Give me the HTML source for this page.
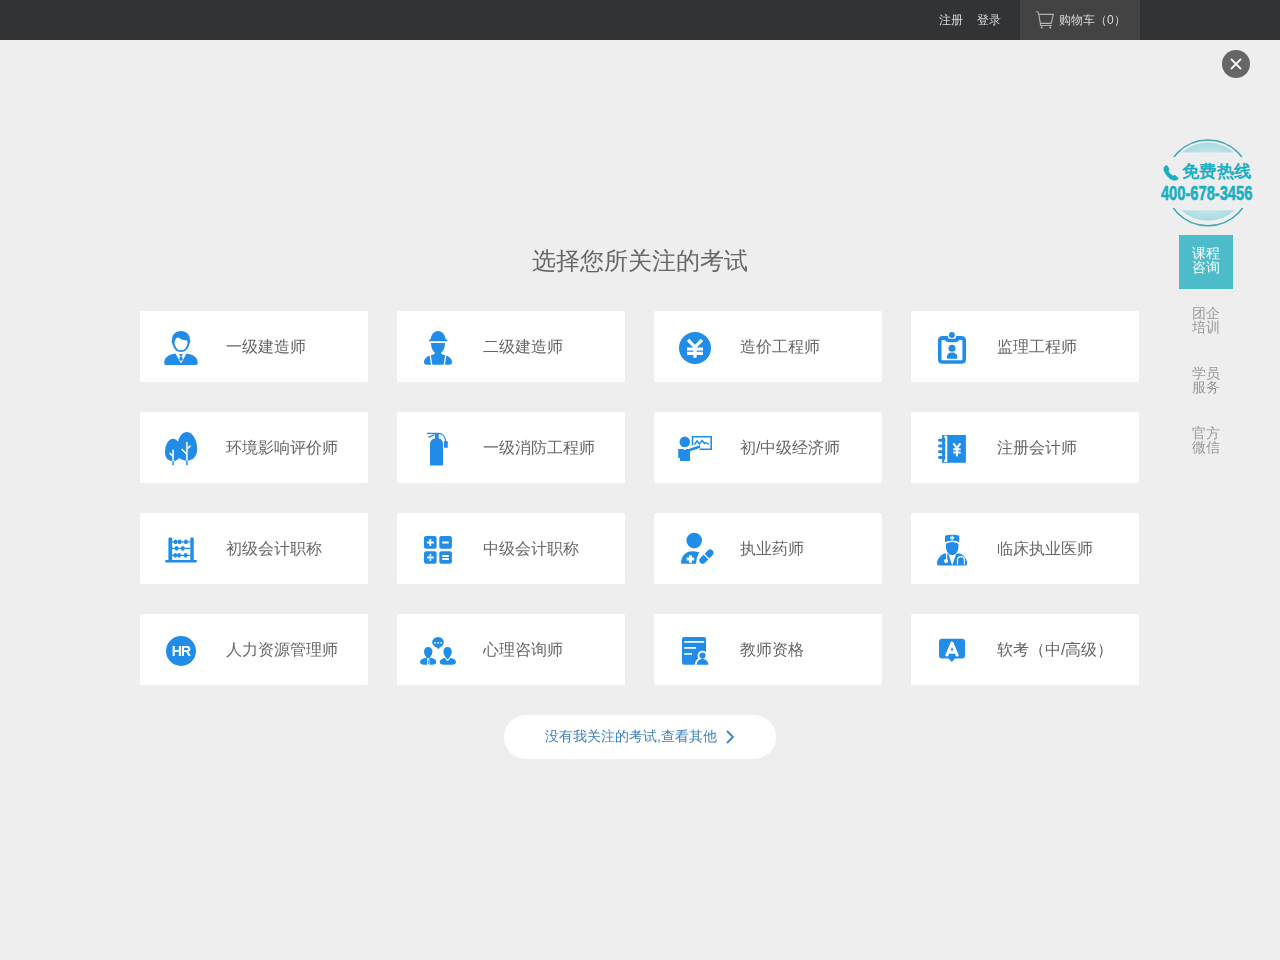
<!DOCTYPE html>
<html><head><meta charset="utf-8"><title>选择您所关注的考试</title>
<style>
*{margin:0;padding:0;box-sizing:border-box}
html,body{width:1280px;height:960px;overflow:hidden;background:#eeeeee;font-family:"Liberation Sans",sans-serif}
.top{position:absolute;left:0;top:0;width:1280px;height:40px;background:#323335}
.top .lk{position:absolute;top:12px;font-size:12px;line-height:16px;color:#d8d8d8;will-change:transform}
.cart{position:absolute;left:1020px;top:0;width:120px;height:40px;background:#434343}
.close{position:absolute;left:1222px;top:50px;width:28px;height:28px;border-radius:50%;background:#666}
.title{position:absolute;left:0;top:245px;width:1280px;text-align:center;font-size:24px;line-height:32px;color:#666;will-change:transform}
.card{position:absolute;width:228px;height:71px;background:#fff;border-radius:2px}
.card svg{position:absolute;left:0;top:0;will-change:transform}
.card span{position:absolute;left:86px;top:25px;font-size:16px;line-height:22px;color:#666;will-change:transform;white-space:nowrap}
.more{position:absolute;left:504px;top:715px;width:272px;height:44px;border-radius:22px;background:#fff}
.more span{position:absolute;left:41px;top:11px;font-size:14px;line-height:20px;color:#3a7fc2;white-space:nowrap;will-change:transform}
.nav{position:absolute;left:1179px;width:54px;height:54px;text-align:center;font-size:14px;line-height:14px;color:#999}
.nav div{position:absolute;left:0;top:11px;width:54px;will-change:transform}
.nav.on{background:#4cbcca;color:#fff}
</style></head><body>
<div class="top">
  <div class="lk" style="left:939px">注册</div>
  <div class="lk" style="left:977px">登录</div>
  <div class="cart">
    <svg width="120" height="40" style="position:absolute;left:0;top:0" viewBox="1020 0 120 40"><path fill="none" stroke="#b4b4b4" stroke-width="1.1" stroke-linejoin="round" d="M1036.3,11.4 Q1038.4,11.6 1038.8,14 L1040.3,23.4 L1051.2,23.4 L1053.4,14.4 L1038.9,14.4 M1040.3,23.4 L1040.5,25.5 L1052,25.5"/><circle cx="1041.7" cy="27.5" r="0.9" fill="#c8c8c8"/><circle cx="1050.3" cy="27.5" r="0.9" fill="#c8c8c8"/></svg>
    <div class="lk" style="left:39px">购物车（0）</div>
  </div>
</div>
<div class="close"><svg width="28" height="28" style="position:absolute;left:0;top:0"><path d="M8.9,8.9 L19.1,19.1 M19.1,8.9 L8.9,19.1" stroke="#fff" stroke-width="1.9"/></svg></div>

<div class="title">选择您所关注的考试</div>

<div class="card" style="left:140px;top:311px"><svg width="80" height="71" viewBox="0 0 80 71" fill="#228de8" stroke="#228de8" stroke-width="0"><path d="M41,20 C46.5,20 50,23.5 50,29 C50.6,29.5 50.6,31.5 49.6,32.5 C48.5,37.5 45.5,41 41,41 C36.5,41 33.5,37.5 32.4,32.5 C31.4,31.5 31.4,29.5 32,29 C32,23.5 35.5,20 41,20 Z"/>
<path fill="#fff" d="M35,29.5 C36,27 37.5,26 38.5,26.5 C40.5,28.5 44,29.5 47.3,29.6 C47.6,31 47.6,32.5 47.2,33.5 C46.2,37.5 44,39.3 41,39.3 C38,39.3 35.8,37.5 34.8,33.5 C34.5,32 34.6,30.5 35,29.5 Z"/>
<path d="M24.2,52 C24.2,46 29,43.5 35.5,42.5 L41,52.6 L46.5,42.5 C53,43.5 57.8,46 57.8,52 C57.8,53.3 57,54 55.8,54 L26.2,54 C25,54 24.2,53.3 24.2,52 Z"/>
<path d="M39.4,43.1 L42.6,43.1 L42.1,45.1 L39.9,45.1 Z M39.9,45.6 L42.1,45.6 L42.8,48.5 L41,50 L39.2,48.5 Z"/></svg><span>一级建造师</span></div>
<div class="card" style="left:397px;top:311px"><svg width="80" height="71" viewBox="0 0 80 71" fill="#228de8" stroke="#228de8" stroke-width="0"><path d="M33.6,29 C33.6,24.5 36.5,20 41,20 C45.5,20 48.6,24.5 48.6,29 Z"/>
<rect x="31.9" y="28.6" width="18.6" height="1.6" rx="0.8"/>
<path d="M34,32.1 L48,32.1 C48,36.5 46.8,39.2 44.6,41.3 C43.8,42 44,43.2 45.5,43.6 L47.5,43.9 C52,44.8 55,48 55,51 C55,52.8 54,53.7 52.5,53.7 L29.5,53.7 C28,53.7 27,52.8 27,51 C27,48 30,44.8 34.5,43.9 L36.5,43.6 C38,43.2 38.2,42 37.4,41.3 C35.2,39.2 34,36.5 34,32.1 Z"/>
<path stroke="#fff" stroke-width="1.3" fill="none" d="M33.1,43.6 L34.8,54.5 M48.9,43.6 L47.2,54.5"/></svg><span>二级建造师</span></div>
<div class="card" style="left:654px;top:311px"><svg width="80" height="71" viewBox="0 0 80 71" fill="#228de8" stroke="#228de8" stroke-width="0"><circle cx="41" cy="37" r="16"/>
<path stroke="#fff" stroke-width="3.2" fill="none" d="M34,28.8 L41,36 L48,28.8 M33,38 L49,38 M33,42.4 L49,42.4 M41,35.5 L41,46.8"/></svg><span>造价工程师</span></div>
<div class="card" style="left:911px;top:311px"><svg width="80" height="71" viewBox="0 0 80 71" fill="#228de8" stroke="#228de8" stroke-width="0"><path fill-rule="evenodd" d="M31.5,25 L36.75,25 C36.9,26.9 37.5,27.75 38.8,27.75 L43.2,27.75 C44.5,27.75 45.1,26.9 45.25,25 L50.5,25 C53.5,25 55,26.5 55,29.5 L55,48.25 C55,51.25 53.5,52.75 50.5,52.75 L31.5,52.75 C28.5,52.75 27,51.25 27,48.25 L27,29.5 C27,26.5 28.5,25 31.5,25 Z M32,29 L33.7,29 C35,30.5 36,31.2 37.8,31.2 L44.2,31.2 C46,31.2 47,30.5 48.3,29 L50,29 C51,29 51.4,29.4 51.4,30.4 L51.4,48 C51.4,49 51,49.3 50,49.3 L32,49.3 C31,49.3 30.5,49 30.5,48 L30.5,30.4 C30.5,29.4 31,29 32,29 Z"/>
<circle cx="40.9" cy="24" r="2.9"/>
<circle cx="41" cy="37.2" r="3.5"/>
<path d="M35.8,46.5 C35.8,43.2 38,41.4 41.1,41.4 C44.2,41.4 46.4,43.2 46.4,46.5 C46.4,47.4 45.8,47.8 44.8,47.8 L37.4,47.8 C36.4,47.8 35.8,47.4 35.8,46.5 Z"/></svg><span>监理工程师</span></div>

<div class="card" style="left:140px;top:412px"><svg width="80" height="71" viewBox="0 0 80 71" fill="#228de8" stroke="#228de8" stroke-width="0"><path d="M25,40.5 C25,32 29,26.8 33,26.8 C35,26.8 36.6,28 38,29.5 C39.5,24 42.5,20 47,20 C53,20 57.2,29 57.2,37 C57.2,44.5 53,48.6 47,48.6 C43.5,48.6 41,47.5 39.2,46 C37.5,48 35.5,49.2 33,49.2 C28,49.2 25,45.5 25,40.5 Z"/>
<path stroke="#fff" stroke-width="1.5" fill="none" d="M33.1,37.5 L33.1,49.3 M29.5,41 L32.8,44.3 M46.9,30 L46.9,48.7 M41.6,37 L46.6,42 M50.6,33.6 L47.1,37"/>
<path stroke-width="1.5" fill="none" d="M33.1,49.2 L33.1,53.3 M46.9,48.6 L46.9,53.3"/></svg><span>环境影响评价师</span></div>
<div class="card" style="left:397px;top:412px"><svg width="80" height="71" viewBox="0 0 80 71" fill="#228de8" stroke="#228de8" stroke-width="0"><path d="M33,33 C33,29 35,27 38,26.6 L41.8,26.6 C44.5,27 46.1,29 46.1,33 L46.1,53.6 L33,53.6 Z"/>
<rect x="38" y="22" width="3.8" height="5"/>
<path stroke-width="1.3" fill="none" d="M29.9,21.4 L41,21.4 C45.5,21.4 48.5,24.5 48.6,29.5 M31.5,25.4 L37.5,22.6"/>
<path d="M47,30 C47,29.3 47.6,29 48.3,29 L49.5,29 C50.3,29 50.8,29.5 50.8,30.2 L50.8,35.8 L47,35.8 Z"/></svg><span>一级消防工程师</span></div>
<div class="card" style="left:654px;top:412px"><svg width="80" height="71" viewBox="0 0 80 71" fill="#228de8" stroke="#228de8" stroke-width="0"><circle cx="30.8" cy="29.9" r="5.3"/>
<path d="M24.2,37 L29.5,37 L30.8,38.3 L32.1,37 L36,37 L36,49 L26,49 L26,46 L24.2,46 Z"/>
<path stroke-width="2.6" fill="none" d="M35,38.3 L46,34.6"/>
<path stroke-width="1.6" fill="none" d="M38.5,33.5 L38.5,24.8 L57.2,24.8 L57.2,37.2 L45.5,37.2"/>
<path stroke-width="1.4" fill="none" d="M40.5,32.5 L43,29 L45.5,32 L48,28.5 L50.5,31.5 L52,30.5 L55,32.5"/></svg><span>初/中级经济师</span></div>
<div class="card" style="left:911px;top:412px"><svg width="80" height="71" viewBox="0 0 80 71" fill="#228de8" stroke="#228de8" stroke-width="0"><path d="M31.1,23 L54.9,23 L54.9,50.8 L31.1,50.8 Z"/>
<path fill="none" stroke="#fff" stroke-width="2.1" d="M33.2,24.9 L35.2,24.9 L35.2,48.9 L33.2,48.9"/>
<rect x="27" y="26.8" width="7.4" height="2.9" rx="1.45"/><rect x="27" y="32.5" width="7.4" height="2.9" rx="1.45"/><rect x="27" y="38.3" width="7.4" height="2.9" rx="1.45"/><rect x="27" y="44" width="7.4" height="2.9" rx="1.45"/>
<path stroke="#fff" stroke-width="2" fill="none" d="M42.4,31.3 L45.9,36 L49.4,31.3 M42.2,37.3 L49.6,37.3 M42.2,40.4 L49.6,40.4 M45.9,35.5 L45.9,44.3"/></svg><span>注册会计师</span></div>

<div class="card" style="left:140px;top:513px"><svg width="80" height="71" viewBox="0 0 80 71" fill="#228de8" stroke="#228de8" stroke-width="0"><path d="M26.2,47 L55.8,47 C56.5,47 57,47.6 57,48.3 C57,49 56.5,49.5 55.8,49.5 L26.2,49.5 C25.5,49.5 25,49 25,48.3 C25,47.6 25.5,47 26.2,47 Z"/>
<path d="M28.4,25.6 C28.4,24.9 29,24.5 30.3,24.5 C31.6,24.5 32.2,24.9 32.2,25.6 L32.2,47.5 L28.4,47.5 Z M50.3,25.6 C50.3,24.9 50.9,24.5 52,24.5 C53.1,24.5 53.75,24.9 53.75,25.6 L53.75,47.5 L50.3,47.5 Z"/>
<path stroke-width="1.2" fill="none" d="M32,28.9 L50.5,28.9 M32,35.4 L50.5,35.4 M32,42.3 L50.5,42.3"/>
<ellipse cx="35.6" cy="28.9" rx="1.9" ry="2.4"/><ellipse cx="39.7" cy="28.9" rx="1.9" ry="2.4"/><ellipse cx="45.9" cy="28.9" rx="1.9" ry="2.4"/><ellipse cx="36.6" cy="35.4" rx="1.9" ry="2.4"/><ellipse cx="42.8" cy="35.4" rx="1.9" ry="2.4"/><ellipse cx="35.3" cy="42.3" rx="1.9" ry="2.4"/><ellipse cx="39.1" cy="42.3" rx="1.9" ry="2.4"/><ellipse cx="45.6" cy="42.3" rx="1.9" ry="2.4"/></svg><span>初级会计职称</span></div>
<div class="card" style="left:397px;top:513px"><svg width="80" height="71" viewBox="0 0 80 71" fill="#228de8" stroke="#228de8" stroke-width="0"><rect x="27" y="23" width="12.6" height="12.8" rx="2"/><rect x="42.3" y="23" width="12.6" height="12.8" rx="2"/>
<rect x="27" y="38.2" width="12.6" height="12.6" rx="2"/><rect x="42.3" y="38.2" width="12.6" height="12.6" rx="2"/>
<path stroke="#fff" stroke-width="1.8" fill="none" d="M29.9,29.5 L36.7,29.5 M33.3,26.1 L33.3,32.9 M45.2,29.5 L51.8,29.5 M30.2,44.5 L36.7,44.5 M45.2,43 L51.8,43 M45.2,46 L51.8,46"/>
<circle cx="33.4" cy="41.9" r="1" fill="#fff"/><circle cx="33.4" cy="47.1" r="1" fill="#fff"/></svg><span>中级会计职称</span></div>
<div class="card" style="left:654px;top:513px"><svg width="80" height="71" viewBox="0 0 80 71" fill="#228de8" stroke="#228de8" stroke-width="0"><circle cx="40.2" cy="27.6" r="7.8"/>
<path d="M27,50.8 C27,43 32,38.3 38,38.3 C40.5,38.3 42.8,38.8 45.5,39.6 C43.5,42.5 42.2,46.5 42.2,50.8 Z"/>
<path fill="#fff" d="M35,42.2 L37.9,42.2 L37.9,44.6 L40.2,44.6 L40.2,47.5 L37.9,47.5 L37.9,49.8 L35,49.8 L35,47.5 L32.6,47.5 L32.6,44.6 L35,44.6 Z"/>
<g transform="translate(52.4,43.6) rotate(-45)"><rect x="-8.6" y="-3.3" width="17.2" height="6.6" rx="3.3"/><rect x="-0.6" y="-4" width="1.3" height="8" fill="#fff"/></g></svg><span>执业药师</span></div>
<div class="card" style="left:911px;top:513px"><svg width="80" height="71" viewBox="0 0 80 71" fill="#228de8" stroke="#228de8" stroke-width="0"><path d="M34,22.8 C38,21.4 44.4,21.4 48.3,22.8 L48.3,29.3 Q41.1,25.8 34,29.3 Z"/>
<path fill="#fff" d="M40.4,22.7 L41.8,22.7 L41.8,24 L43.1,24 L43.1,25.4 L41.8,25.4 L41.8,26.7 L40.4,26.7 L40.4,25.4 L39.1,25.4 L39.1,24 L40.4,24 Z"/>
<path d="M34.9,30.8 Q41.1,27.3 47.4,30.8 L47.4,33.5 C47.4,37.5 45.5,40 44.5,41 C43.5,41.8 42.5,42 41.2,42 C39.9,42 38.9,41.8 37.9,41 C36.9,40 34.9,37.5 34.9,33.5 Z"/>
<path d="M33.5,40.5 L37.3,40.8 L41.2,52.5 L45.2,40.8 L48.9,40.5 C53.5,42.5 56.2,46.5 56.2,50.5 C56.2,52 55.5,52.6 54,52.6 L28.2,52.6 C26.7,52.6 26,52 26,50.5 C26,46.5 28.8,42.5 33.5,40.5 Z"/>
<path stroke="#fff" stroke-width="1.2" fill="none" d="M35.6,40.8 L35.6,46.5 M46.5,51.5 L46.5,46.8 C46.5,44.8 47.8,43.6 49.9,43.6 C52,43.6 53.4,44.8 53.4,46.8 L53.4,51.5"/>
<circle cx="35" cy="48" r="2" fill="#fff"/></svg><span>临床执业医师</span></div>

<div class="card" style="left:140px;top:614px"><svg width="80" height="71" viewBox="0 0 80 71" fill="#228de8" stroke="#228de8" stroke-width="0"><circle cx="41" cy="37" r="15"/>
<text x="41" y="42" text-anchor="middle" fill="#fff" font-family="Liberation Sans" font-weight="bold" font-size="14" letter-spacing="-0.9">HR</text></svg><span>人力资源管理师</span></div>
<div class="card" style="left:397px;top:614px"><svg width="80" height="71" viewBox="0 0 80 71" fill="#228de8" stroke="#228de8" stroke-width="0"><ellipse cx="41" cy="28.3" rx="5.8" ry="5.3"/><path d="M39.3,33 L41.4,35.3 L43,33 Z"/>
<circle cx="38.1" cy="28.8" r="0.9" fill="#fff"/><circle cx="41.1" cy="28.8" r="0.9" fill="#fff"/><circle cx="44.2" cy="28.8" r="0.9" fill="#fff"/>
<path d="M31.2,33 C33.6,33 35.4,35 35.4,37.8 C35.4,40.3 33.8,42.2 32.6,44.5 L29.8,44.5 C28.6,42.2 27,40.3 27,37.8 C27,35 28.8,33 31.2,33 Z"/>
<path d="M28.3,44 L34.5,44 C37.3,44.5 39.3,46 39.3,48 C39.3,49.8 37.8,50.8 35.5,50.8 L27,50.8 C24.6,50.8 23,49.8 23,48 C23,46 25.3,44.5 28.3,44 Z"/>
<path stroke="#fff" stroke-width="2.4" fill="none" d="M31.2,44.2 L31.3,51"/><path stroke-width="0.9" fill="none" d="M31.25,45.5 L31.25,50.2"/>
<path d="M50.6,33 C53,33 54.8,35 54.8,37.8 C54.8,40.3 53.2,42.2 52,44.5 L49.2,44.5 C48,42.2 46.4,40.3 46.4,37.8 C46.4,35 48.2,33 50.6,33 Z"/>
<path d="M48,44 L53.3,44 C56.8,44.5 59,46 59,48 C59,49.8 57.4,50.8 55,50.8 L46.6,50.8 C44.2,50.8 42.7,49.8 42.7,48 C42.7,46 45,44.5 48,44 Z"/>
<path stroke="#fff" stroke-width="1.1" fill="none" d="M48.4,44.1 L50.6,46.4 L52.8,44.1"/></svg><span>心理咨询师</span></div>
<div class="card" style="left:654px;top:614px"><svg width="80" height="71" viewBox="0 0 80 71" fill="#228de8" stroke="#228de8" stroke-width="0"><rect x="28" y="22.9" width="24" height="27.8" rx="2"/>
<path stroke="#fff" stroke-width="1.8" fill="none" d="M30.2,27.9 L50.2,27.9 M30.2,33.8 L42,33.8 M30.2,39.8 L38,39.8"/>
<circle cx="48.5" cy="41.6" r="4.9" fill="#fff"/>
<path fill="#fff" d="M40.6,52 C40.8,46.5 44,43.3 48.5,43.3 C53,43.3 56.2,46.5 56.4,52 Z"/>
<circle cx="48.5" cy="41.6" r="3.1"/>
<path d="M42.6,50.7 C42.9,47.2 45.2,45.1 48.5,45.1 C51.8,45.1 54.1,47.2 54.4,50.7 Z"/></svg><span>教师资格</span></div>
<div class="card" style="left:911px;top:614px"><svg width="80" height="71" viewBox="0 0 80 71" fill="#228de8" stroke="#228de8" stroke-width="0"><path d="M31,24.8 L51,24.8 C53,24.8 54,25.8 54,27.8 L54,41.4 C54,43.4 53,44.4 51,44.4 L44,44.4 L40.8,47.9 L37.6,44.4 L31,44.4 C29,44.4 28,43.4 28,41.4 L28,27.8 C28,25.8 29,24.8 31,24.8 Z"/>
<path stroke="#fff" stroke-width="3.1" stroke-linecap="round" stroke-linejoin="round" fill="none" d="M35.9,41 L41,29.1 L46.1,41 M37.5,38.1 L44.5,38.1"/></svg><span>软考（中/高级）</span></div>

<div class="more"><span>没有我关注的考试,查看其他</span><svg width="272" height="44" style="position:absolute;left:0;top:0" viewBox="504 715 272 44"><path d="M727,731 L733,737 L727,743" fill="none" stroke="#3a80c8" stroke-width="1.8"/></svg></div>

<svg width="110" height="100" style="position:absolute;left:1150px;top:130px" viewBox="0 0 110 100">
<defs><clipPath id="ct"><rect x="0" y="0" width="110" height="27"/><rect x="0" y="78" width="110" height="22"/></clipPath>
<clipPath id="cd"><rect x="0" y="0" width="110" height="22.6"/><rect x="0" y="80.2" width="110" height="22"/></clipPath>
<linearGradient id="gt" x1="0" y1="0" x2="0" y2="1"><stop offset="0" stop-color="#a9dde4"/><stop offset="1" stop-color="#c6e8ec"/></linearGradient>
<linearGradient id="gb" x1="0" y1="0" x2="0" y2="1"><stop offset="0" stop-color="#c6e8ec"/><stop offset="1" stop-color="#a9dde4"/></linearGradient></defs>
<circle cx="57.9" cy="52.9" r="42.8" fill="none" stroke="#3fa6b4" stroke-width="1.5" clip-path="url(#ct)"/>
<radialGradient id="gr" cx="0.5" cy="0.5" r="0.5"><stop offset="0.6" stop-color="#d2ecef"/><stop offset="1" stop-color="#a8dbe2"/></radialGradient><g clip-path="url(#cd)"><circle cx="57.9" cy="51.6" r="39" fill="url(#gr)"/></g>
<path d="M14.5,36.5 C13,37.5 13.2,40.5 15.5,44 C18.5,48.5 22.5,51 25.5,50.6 C27.5,50.3 28.6,49 28.3,47.8 L25.3,45.2 C24.6,44.8 23.8,45 23.2,45.8 C21.5,45.2 19.2,42.8 18.4,40.7 C19.2,40.1 19.5,39.3 19.2,38.6 L17,35.3 C16.2,35 15.2,35.8 14.5,36.5 Z" fill="#1aaec4"/>
<text x="32" y="47.2" font-size="17.3" font-weight="bold" fill="#1aaec4" font-family="Liberation Sans, sans-serif" textLength="69" lengthAdjust="spacingAndGlyphs">免费热线</text>
<text x="10.9" y="70.3" font-size="19.4" font-weight="bold" fill="#1aaec4" stroke="#1aaec4" stroke-width="0.55" stroke-linejoin="round" font-family="Liberation Sans" textLength="91.5" lengthAdjust="spacingAndGlyphs">400-678-3456</text>
</svg>
<div class="nav on" style="top:235px"><div>课程<br>咨询</div></div>
<div class="nav" style="top:295px"><div>团企<br>培训</div></div>
<div class="nav" style="top:355px"><div>学员<br>服务</div></div>
<div class="nav" style="top:415px"><div>官方<br>微信</div></div>
</body></html>
